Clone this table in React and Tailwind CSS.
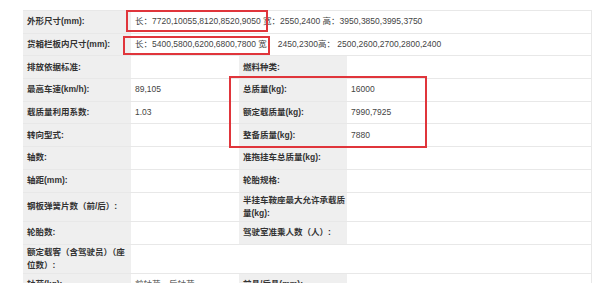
import React from "react";

const FONT = { fontFamily: '"Liberation Sans", "Noto Sans CJK SC", sans-serif' };

function L({ children }) {
  return (
    <div className="flex items-center bg-[#efefef] pl-[4px] pr-[2px] font-bold text-[#333] leading-[13px]">
      <span className="whitespace-nowrap">{children}</span>
    </div>
  );
}

function V({ children, span }) {
  return (
    <div className={`flex items-center bg-white pl-[4px] text-[8.5px] text-[#444] leading-[13px] whitespace-nowrap ${span ? "col-span-3" : ""}`}>
      {children}
    </div>
  );
}

function Row({ children, tall }) {
  return (
    <div className={`grid grid-cols-[108px_108px_108px_244px] border-b border-[#e8e8e8] ${tall ? "h-[29.4px]" : "h-[22.7px]"}`}>
      {children}
    </div>
  );
}

export default function App() {
  return (
    <div className="relative w-[600px] h-[283px] overflow-hidden bg-white text-[8.5px]" style={FONT}>
      <div className="ml-[23px] mt-[10px] w-[569px] border-t border-r border-[#e8e8e8]">
        <Row>
          <L>外形尺寸(mm):</L>
          <V span>长：7720,10055,8120,8520,9050 宽：2550,2400 高：3950,3850,3995,3750</V>
        </Row>
        <Row>
          <L>货箱栏板内尺寸(mm):</L>
          <V span>长：5400,5800,6200,6800,7800 宽：&nbsp;2450,2300高：&nbsp;2500,2600,2700,2800,2400</V>
        </Row>
        <Row>
          <L>排放依据标准:</L>
          <V></V>
          <L>燃料种类:</L>
          <V></V>
        </Row>
        <Row>
          <L>最高车速(km/h):</L>
          <V>89,105</V>
          <L>总质量(kg):</L>
          <V>16000</V>
        </Row>
        <Row>
          <L>载质量利用系数:</L>
          <V>1.03</V>
          <L>额定载质量(kg):</L>
          <V>7990,7925</V>
        </Row>
        <Row>
          <L>转向型式:</L>
          <V></V>
          <L>整备质量(kg):</L>
          <V>7880</V>
        </Row>
        <Row>
          <L>轴数:</L>
          <V></V>
          <L>准拖挂车总质量(kg):</L>
          <V></V>
        </Row>
        <Row>
          <L>轴距(mm):</L>
          <V></V>
          <L>轮胎规格:</L>
          <V></V>
        </Row>
        <Row tall>
          <L>钢板弹簧片数（前/后）:</L>
          <V></V>
          <L>
            半挂车鞍座最大允许承载质
            <br />
            量(kg):
          </L>
          <V></V>
        </Row>
        <Row>
          <L>轮胎数:</L>
          <V></V>
          <L>驾驶室准乘人数（人）:</L>
          <V></V>
        </Row>
        <Row tall>
          <L>
            额定载客（含驾驶员）（座
            <br />
            位数）:
          </L>
          <V span></V>
        </Row>
        <Row>
          <L>轴荷(kg):</L>
          <V>前轴荷，后轴荷</V>
          <L>前悬/后悬(mm):</L>
          <V></V>
        </Row>
      </div>

      <div className="absolute left-[126px] top-[10px] w-[142px] h-[22px] border-2 border-[#e0353b]" />
      <div className="absolute left-[123px] top-[36px] w-[147px] h-[19px] border-2 border-[#e0353b]" />
      <div className="absolute left-[229px] top-[76px] w-[198px] h-[72px] border-2 border-[#e0353b]" />
    </div>
  );
}
